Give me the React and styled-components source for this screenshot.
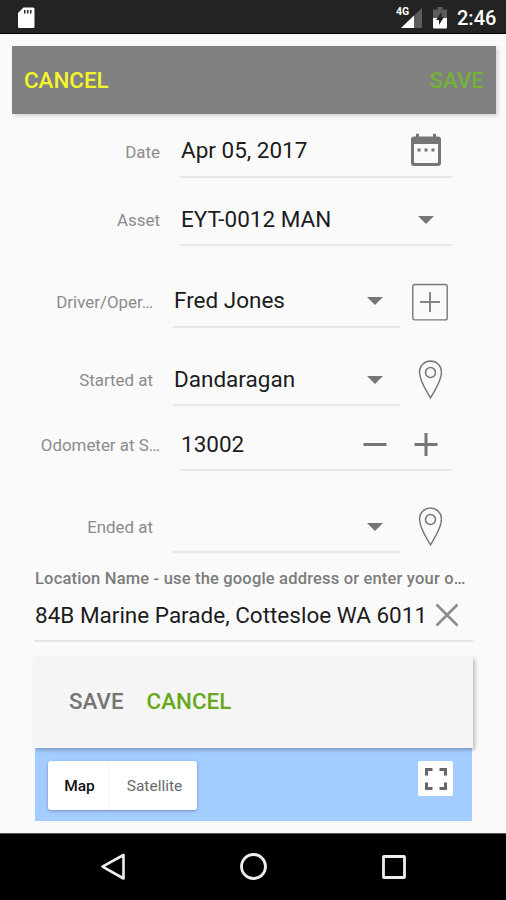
import React from "react";
import styled, { createGlobalStyle } from "styled-components";

const locations = { started: "Dandaragan", ended: "" };

const Caret = () => (
  <svg width="18" height="12" viewBox="0 0 18 12">
    <path d="M1 3h16l-8 8z" fill="#757575" />
  </svg>
);

const CalendarIcon = () => (
  <svg width="30" height="34" viewBox="0 0 30 34">
    <path
      d="M3 3.500h2V.8h3v2.700h14V.8h3v2.700h2a3 3 0 0 1 3 3V30a3 3 0 0 1-3 3H3a3 3 0 0 1-3-3V6.500a3 3 0 0 1 3-3zM3 11v18a1 1 0 0 0 1 1h22a1 1 0 0 0 1-1V11z"
      fill="#757575"
      fillRule="evenodd"
    />
    <path d="M6.500 15.500h3v3h-3zM13.500 15.500h3v3h-3zM20.500 15.500h3v3h-3z" fill="#757575" />
  </svg>
);

const AddBoxIcon = () => (
  <svg width="36" height="38" viewBox="0 0 36 38" fill="none">
    <rect x=".8" y="1.500" width="34.400" height="35.400" rx="2" stroke="#777" strokeWidth="1.400" />
    <path d="M8 19h20M18 9v20" stroke="#858585" strokeWidth="2" />
  </svg>
);

const PinIcon = () => (
  <svg width="24" height="40" viewBox="0 0 24 40" fill="none" stroke="#757575">
    <path
      d="M12.500 1C6.300 1 1.500 5.700 1.500 12c0 9 7 19 11 26 4-7 11-17 11-26 0-6.300-4.800-11-11-11z"
      strokeWidth="1.400"
    />
    <circle cx="12.500" cy="12.500" r="5" strokeWidth="1.500" />
  </svg>
);

const MinusIcon = () => (
  <svg width="24" height="24" viewBox="0 0 24 24">
    <path d="M.5 12.500h23" stroke="#757575" strokeWidth="3" />
  </svg>
);

const PlusIcon = () => (
  <svg width="24" height="24" viewBox="0 0 24 24">
    <path d="M.5 12.500h23M12 1v23" stroke="#757575" strokeWidth="3" />
  </svg>
);

const ClearIcon = () => (
  <svg width="24" height="24" viewBox="0 0 24 24">
    <path d="M1.500 1.500l21 21M22.500 1.500l-21 21" stroke="#8c8c8c" strokeWidth="2.600" />
  </svg>
);

const FullscreenIcon = () => (
  <svg width="22" height="22" viewBox="0 0 22 22" fill="none" stroke="#666" strokeWidth="3">
    <path d="M1.500 7.500v-6h6M14.500 1.500h6v6M20.500 14.500v6h-6M7.500 20.500h-6v-6" />
  </svg>
);

const SdCardIcon = () => (
  <svg width="17" height="22" viewBox="0 0 17 22">
    <path d="M5.500.5H15a1.500 1.500 0 0 1 1.500 1.500v17.500A1.500 1.500 0 0 1 15 21H1.500A1.500 1.500 0 0 1 0 19.500V6z" fill="#fff" />
    <path d="M6 3h1.500v3.500H6zM9 3h1.500v3.500H9zM12 3h1.500v3.500H12z" fill="#232323" />
  </svg>
);

const SignalIcon = () => (
  <svg width="21" height="20" viewBox="0 0 21 20">
    <path d="M21 0v20H0z" fill="#5c5c5c" />
    <path d="M13 7.600V20H0z" fill="#fff" />
  </svg>
);

const BatteryIcon = () => (
  <svg width="14" height="22" viewBox="0 0 14 22">
    <path d="M4.500 0h5v2.500H14V12H0V2.500h4.500z" fill="#5c5c5c" />
    <path d="M0 11h14v9.500a1 1 0 0 1-1 1H1a1 1 0 0 1-1-1z" fill="#fff" />
    <path d="M8.500 5L3 13h3v5l5-8H8.500z" fill="#232323" />
  </svg>
);

const Field = ({ label, value, narrow, raised, gap, action, children }) => (
  <Row $gap={gap}>
    <Label $narrow={narrow}>{label}</Label>
    <Input $narrow={narrow} $raised={raised}>
      <Value>{value}</Value>
      <Controls $narrow={narrow}>{children}</Controls>
    </Input>
    {action && <Action>{action}</Action>}
  </Row>
);

const App = () => (
  <Screen>
    <GlobalStyle />
    <StatusBar>
      <SdCardIcon />
      <StatusIcons>
        <Network>
          <SignalIcon />
          <NetworkType>4G</NetworkType>
        </Network>
        <BatteryIcon />
        <Clock>2:46</Clock>
      </StatusIcons>
    </StatusBar>

    <Content>
      <Toolbar>
        <TextButton $color="#f4f42c">CANCEL</TextButton>
        <TextButton $color="#75b03a">SAVE</TextButton>
      </Toolbar>

      <Field label="Date" value="Apr 05, 2017" gap={10} raised>
        <CalendarIcon />
      </Field>
      <Field label="Asset" value="EYT-0012 MAN" gap={14}>
        <CaretSlot>
          <Caret />
        </CaretSlot>
      </Field>
      <Field label="Driver/Oper…" value="Fred Jones" gap={28} narrow raised action={<AddBoxIcon />}>
        <Caret />
      </Field>
      <Field label="Started at" value={locations.started} gap={24} narrow action={<PinIcon />}>
        <Caret />
      </Field>
      <Field label="Odometer at S…" value="13002" gap={11}>
        <Stepper>
          <MinusIcon />
          <PlusIcon />
        </Stepper>
      </Field>
      <Field label="Ended at" value={locations.ended} gap={28} narrow action={<PinIcon />}>
        <Caret />
      </Field>

      <Location>
        <LocationLabel>Location Name - use the google address or enter your o…</LocationLabel>
        <LocationInput>
          <Address>84B Marine Parade, Cottesloe WA 6011</Address>
          <ClearIcon />
        </LocationInput>
      </Location>

      <Panel>
        <TextButton $color="#757575">SAVE</TextButton>
        <TextButton $color="#68a91c">CANCEL</TextButton>
      </Panel>
      <MapArea>
        <MapTypes>
          <MapType $active>Map</MapType>
          <MapType>Satellite</MapType>
        </MapTypes>
        <FullscreenButton>
          <FullscreenIcon />
        </FullscreenButton>
      </MapArea>
    </Content>

    <NavBar>
      <svg width="28" height="30" viewBox="0 0 28 30">
        <path d="M24.500 3v23.500L3.500 14.700z" fill="none" stroke="#eee" strokeWidth="2.600" strokeLinejoin="round" />
      </svg>
      <svg width="28" height="30" viewBox="0 0 28 30">
        <circle cx="13.500" cy="14.500" r="12" fill="none" stroke="#eee" strokeWidth="2.800" />
      </svg>
      <svg width="28" height="30" viewBox="0 0 28 30">
        <rect x="3.500" y="4.500" width="21" height="21" rx=".5" fill="none" stroke="#eee" strokeWidth="2.800" />
      </svg>
    </NavBar>
  </Screen>
);

const GlobalStyle = createGlobalStyle`
  * {
    box-sizing: border-box;
  }
  body {
    margin: 0;
    font-family: Roboto, "Liberation Sans", sans-serif;
    background: #fafafa;
  }
  button {
    border: none;
    background: transparent;
    padding: 0;
    font-family: inherit;
    cursor: pointer;
  }
  svg {
    display: block;
    flex-shrink: 0;
  }
`;

const Screen = styled.div`
  width: 506px;
  height: 900px;
  display: flex;
  flex-direction: column;
  overflow: hidden;
`;

const StatusBar = styled.header`
  height: 34px;
  padding: 3px 11px 0 18px;
  display: flex;
  align-items: center;
  justify-content: space-between;
  background: #232323;
  border-bottom: 1px solid #000;
`;

const StatusIcons = styled.div`
  display: flex;
  align-items: center;
`;

const Network = styled.div`
  position: relative;
  margin-right: 11px;
`;

const NetworkType = styled.span`
  position: absolute;
  top: -2px;
  left: -5px;
  font-size: 10.5px;
  line-height: 11px;
  font-weight: 700;
  color: #fff;
`;

const Clock = styled.span`
  width: 38px;
  margin-left: 10px;
  font-size: 20px;
  font-weight: 500;
  color: #fff;
`;

const Content = styled.main`
  flex: 1;
  padding-top: 12px;
`;

const Toolbar = styled.div`
  height: 68px;
  margin: 0 10px 0 12px;
  padding: 0 12px;
  display: flex;
  align-items: center;
  justify-content: space-between;
  background: #808080;
  box-shadow: 2px 2px 4px rgba(0, 0, 0, 0.16);
`;

const TextButton = styled.button`
  font-size: 22.4px;
  font-weight: 500;
  color: ${(p) => p.$color};
`;

const Row = styled.div`
  height: 54px;
  margin-top: ${(p) => p.$gap}px;
  display: flex;
`;

const Label = styled.label`
  width: ${(p) => (p.$narrow ? 153 : 160)}px;
  line-height: 57px;
  text-align: right;
  white-space: nowrap;
  font-size: 16.9px;
  color: #8c8c8c;
`;

const Input = styled.div`
  width: ${(p) => (p.$narrow ? 227 : 272)}px;
  margin-left: 20px;
  padding-top: ${(p) => (p.$raised ? 0 : 2)}px;
  display: flex;
  align-items: center;
  justify-content: space-between;
  border-bottom: 2px solid #e8e8e8;
`;

const Value = styled.span`
  padding-left: 1px;
  font-size: 22.5px;
  color: #1c1c1c;
`;

const Controls = styled.div`
  display: flex;
  align-items: center;
  justify-content: flex-end;
  padding-right: ${(p) => (p.$narrow ? 16 : 11)}px;
`;

const CaretSlot = styled.div`
  padding-right: 6px;
`;

const Stepper = styled.div`
  display: flex;
  gap: 27px;
  padding-right: 3px;
`;

const Action = styled.button`
  width: 36px;
  margin-left: 12px;
  padding-top: 1px;
  display: flex;
  align-items: center;
  justify-content: center;
`;

const Location = styled.div`
  margin: 15px 33px 0 34px;
`;

const LocationLabel = styled.div`
  padding-left: 1px;
  line-height: 22px;
  white-space: nowrap;
  font-size: 16.5px;
  font-weight: 500;
  letter-spacing: 0.18px;
  color: #7c7c7c;
`;

const LocationInput = styled.div`
  height: 52px;
  padding: 0 14px 1px 1px;
  display: flex;
  align-items: center;
  justify-content: space-between;
  border-bottom: 2px solid #e4e4e4;
`;

const Address = styled.span`
  white-space: nowrap;
  font-size: 22.5px;
  color: #1c1c1c;
`;

const Panel = styled.div`
  position: relative;
  height: 91px;
  margin: 15px 33px 0 34px;
  padding: 0 0 3px 35px;
  display: flex;
  align-items: center;
  gap: 23px;
  background: #f5f5f5;
  box-shadow: 2px 2px 4px rgba(0, 0, 0, 0.25);
`;

const MapArea = styled.div`
  height: 73px;
  margin: 0 34px 0 35px;
  padding: 13px 19px 0 13px;
  display: flex;
  align-items: flex-start;
  justify-content: space-between;
  background: #a3ccff;
`;

const MapTypes = styled.div`
  height: 49px;
  display: flex;
  background: #fff;
  border-radius: 3px;
  box-shadow: 0 1px 3px rgba(0, 0, 0, 0.3);
`;

const MapType = styled.button`
  width: ${(p) => (p.$active ? 61 : 88)}px;
  padding-left: 3px;
  font-size: 15.5px;
  font-weight: ${(p) => (p.$active ? 500 : 400)};
  color: ${(p) => (p.$active ? "#111" : "#6a6a6a")};
  border-right: ${(p) => (p.$active ? "1px solid #f4f4f4" : "none")};
`;

const FullscreenButton = styled.button`
  width: 35px;
  height: 35px;
  display: grid;
  place-items: center;
  background: #fff;
  border-radius: 2px;
`;

const NavBar = styled.nav`
  height: 67px;
  display: flex;
  align-items: center;
  justify-content: space-between;
  padding: 0 98px 0 99px;
  background: #000;
  border-top: 1px solid #555;
`;

export default App;
